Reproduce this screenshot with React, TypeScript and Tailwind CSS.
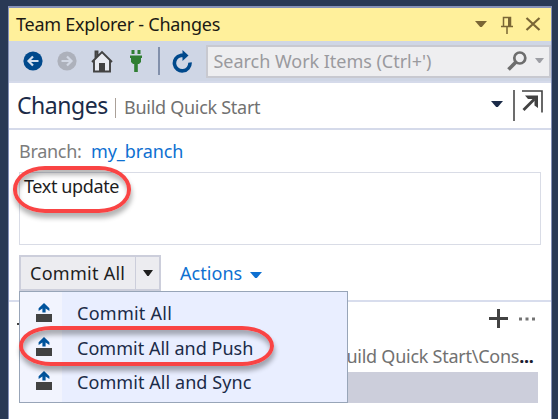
import type { ReactNode } from "react";

function Caret({ className, w = 12, h = 6 }: { className: string; w?: number; h?: number }) {
  return (
    <svg className={`block shrink-0 ${className}`} width={w} height={h} viewBox="0 0 12 6" preserveAspectRatio="none">
      <path d="M0 0H12L6.8 6H5.2Z" fill="currentColor" />
    </svg>
  );
}

function TitleBar() {
  return (
    <div className="flex h-[33px] items-center bg-[#fff09b] pl-[7px] text-[#1c1a14]">
      <span className="w-[205px] whitespace-nowrap pb-px text-[18px] leading-[24px] tracking-[-0.26px]">Team Explorer - Changes</span>
      <Caret className="mb-[2px] ml-[254px] text-[#7a6635]" />
      <svg className="ml-[14px] block shrink-0" width="12" height="18" viewBox="0 0 12 18">
        <path d="M2.5 10V1.5H9.5V10M0 10.5H12M6 11V18" fill="none" stroke="#7a6635" strokeWidth="1.5" />
        <path d="M7 1H10V10H7Z" fill="#7a6635" />
      </svg>
      <svg className="mb-[2px] ml-[12px] block shrink-0" width="16" height="14" viewBox="0 0 16 14">
        <path d="M1.5 1L14.5 13M14.5 1L1.5 13" stroke="#7a6635" strokeWidth="2.2" />
      </svg>
    </div>
  );
}

function Toolbar() {
  return (
    <div className="flex h-[40px] items-center bg-[#cfd6e5] pl-[14px]">
      <svg className="block shrink-0" width="20" height="20" viewBox="0 0 20 20">
        <circle cx="10" cy="10" r="9.6" fill="#00498c" />
        <path d="M15.5 10H6M10 5.5L5.5 10L10 14.5" fill="none" stroke="#d5e0ee" strokeWidth="2.2" />
      </svg>
      <svg className="ml-[14px] block shrink-0" width="20" height="20" viewBox="0 0 20 20">
        <circle cx="10" cy="10" r="9.6" fill="#adb1bb" />
        <path d="M4.5 10H14M10 5.5L14.5 10L10 14.5" fill="none" stroke="#d2d8e4" strokeWidth="2.2" />
      </svg>
      <svg className="ml-[14px] block shrink-0" width="22" height="23" viewBox="0 0 22 23">
        <path d="M3 11V21.5H19V11L11 3Z" fill="#e9ebf1" />
        <path d="M1 12L11 2L21 12M3 10.5V21.5H19V10.5M4.5 8V1.5H6.5V6" fill="none" stroke="#424242" strokeWidth="1.9" />
        <path d="M8 13H14V22H8Z" fill="#424242" />
      </svg>
      <svg className="ml-[17px] block shrink-0" width="12" height="22" viewBox="0 0 12 22">
        <path d="M1.5 0H4.5V4H1.5ZM7.5 0H10.5V4H7.5ZM0 5.5H12V8H11V12L9 14H7.8V22H4.2V14H3L1 12V8H0Z" fill="#2f7e32" />
      </svg>
      <div className="ml-[16px] h-[28px] w-[1.5px] bg-[#8290ab]" />
      <svg className="ml-[12px] block shrink-0" width="21" height="23" viewBox="0 0 21 23">
        <path d="M18 12.5A7.8 7.8 0 1 1 8.8 5.4H12" fill="none" stroke="#00498c" strokeWidth="3.6" />
        <path d="M10.5 0L16.5 5.5L10.5 11Z" fill="#00498c" />
      </svg>
      <div className="ml-[13px] flex h-[33px] flex-1 items-center border-2 border-[#c8c9d0] bg-[#eeeef0] pl-[6px] text-[#9a9a9e]">
        <span className="w-[220px] whitespace-nowrap pb-px text-[18px] leading-[24px] tracking-[-0.03px]">Search Work Items (Ctrl+')</span>
        <svg className="mb-px ml-[73px] block shrink-0" width="20" height="20" viewBox="0 0 20 20">
          <circle cx="12.8" cy="7" r="5.5" fill="none" stroke="#6d6d6d" strokeWidth="2.7" />
          <path d="M9 11L1.5 18.5" stroke="#6d6d6d" strokeWidth="3.7" />
        </svg>
        <Caret className="mb-px ml-[8px] text-[#9d9ea4]" w={9} h={5} />
      </div>
    </div>
  );
}

function Heading() {
  return (
    <div className="flex h-[49px] items-center border-y-2 border-[#d5daea] pl-[8px]">
      <span className="w-[92px] whitespace-nowrap pb-px text-[23px] leading-[30px] tracking-[-0.45px] text-[#1b2b48]">Changes</span>
      <div className="mt-[4px] ml-[6px] h-[20px] w-px bg-[#aaa098]" />
      <span className="ml-[8px] w-[138px] whitespace-nowrap pt-[2px] text-[18px] leading-[24px] tracking-[-0.28px] text-[#717171]">Build Quick Start</span>
      <Caret className="mb-[4px] ml-[229px] text-[#1b2b48]" />
      <div className="mb-px ml-[10px] h-[31px] w-[1.5px] bg-[#6c6c6c]" />
      <svg className="mb-[9px] ml-[7px] block shrink-0" width="21" height="23" viewBox="0 0 21 23">
        <path d="M0 1H20V22.5" fill="none" stroke="#424242" strokeWidth="1.6" />
        <path d="M1.5 20L12.5 9" fill="none" stroke="#424242" strokeWidth="2.8" />
        <path d="M3 5.5H16V18L12.5 15.5V9H6Z" fill="#424242" />
      </svg>
    </div>
  );
}

function UploadIcon() {
  return (
    <svg className="block shrink-0" width="16" height="19" viewBox="0 0 16 19">
      <path d="M8 0L13.4 5.2V8L9.6 5.4V9.5H6.4V5.4L2.6 8V5.2Z" fill="#00539c" />
      <path d="M0 11H16V19H0Z" fill="#424242" />
    </svg>
  );
}

function MenuItem({ children, spacing }: { children: ReactNode; spacing: string }) {
  return (
    <div className="flex h-[34.4px] items-center">
      <div className="flex h-full w-[42px] items-center pb-[2px] pl-[16px]">
        <UploadIcon />
      </div>
      <span className={`ml-[15px] whitespace-nowrap text-[18px] leading-[24px] text-[#1b2b48] ${spacing}`}>{children}</span>
    </div>
  );
}

function CommitMenu() {
  return (
    <div className="absolute left-[10px] top-[36px] h-[112px] w-[329px] border border-[#98a5b8] bg-[linear-gradient(90deg,#f2f4fe_42px,#e9eeff_42px)] pt-[4px]">
      <MenuItem spacing="tracking-[0.26px]">Commit All</MenuItem>
      <MenuItem spacing="tracking-[0.02px]">Commit All and Push</MenuItem>
      <MenuItem spacing="tracking-[0.07px]">Commit All and Sync</MenuItem>
      <div className="absolute left-[-1px] top-[34px] h-[40px] w-[255px] [border-radius:32px_/_20px] border-4 border-[#f94444] shadow-[1px_5px_5px_rgba(0,0,0,0.32),inset_1px_5px_5px_rgba(0,0,0,0.3)]" />
    </div>
  );
}

export default function App() {
  return (
    <div className="h-[419px] w-[558px] overflow-hidden bg-[#293955] pl-[8px] pt-[6px] font-['Noto_Sans','Open_Sans',sans-serif]">
      <div className="h-[413px] w-[544px] border-x border-t-2 border-[#8591b8] bg-white">
        <TitleBar />
        <Toolbar />
        <Heading />
        <div className="flex h-[42px] items-center pl-[10px] text-[18px] leading-[24px] tracking-[-0.3px]">
          <span className="w-[62px] whitespace-nowrap text-[#7c7c7c]">Branch:</span>
          <span className="ml-[10px] w-[92px] whitespace-nowrap tracking-[-0.1px] text-[#0e70d1]">my_branch</span>
        </div>
        <div className="relative ml-[10px] h-[73px] w-[522px] border border-[#d9dce6] pl-[4px] text-[18px] leading-[26px] tracking-[-0.38px] text-[#1e1e1e]">
          <span className="whitespace-nowrap">Text update</span>
          <div className="absolute left-[-7px] top-[-7px] h-[47px] w-[118px] [border-radius:32px_/_23px] border-4 border-[#f94444] shadow-[1px_5px_5px_rgba(0,0,0,0.3),inset_1px_5px_5px_rgba(0,0,0,0.28)]" />
        </div>
        <div className="relative z-10 mt-[10px] flex h-[36px] pl-[10px]">
          <div className="flex h-[36px] w-[142px] border-2 border-[#cccedb] bg-[#ececf0] text-[#1e1e1e]">
            <div className="flex w-[115px] items-center border-r border-[#cccedb] pl-[9px] text-[18px] leading-[24px] tracking-[0.27px]">
              <span className="whitespace-nowrap">Commit All</span>
            </div>
            <div className="flex flex-1 items-center justify-center">
              <Caret className="text-[#1e1e1e]" w={10} />
            </div>
          </div>
          <div className="ml-[19px] flex items-center text-[18px] leading-[24px] tracking-[0.05px] text-[#0e70d1]">
            <span className="w-[63px] whitespace-nowrap">Actions</span>
            <Caret className="ml-[7px] mt-[3px]" />
          </div>
          <CommitMenu />
        </div>
        <div className="mt-[9px] h-[2px] bg-[#d8dded]" />
        <div className="relative flex h-[34px] items-center justify-end pb-px pr-[16px]">
          <div className="absolute left-[8px] top-[21px] h-[2px] w-[2px] bg-[#424242]" />
          <svg className="block" width="19" height="19" viewBox="0 0 19 19">
            <path d="M9.5 0V19M0 9.5H19" stroke="#424242" strokeWidth="3" />
          </svg>
          <svg className="ml-[11px] block" width="16" height="4" viewBox="0 0 16 4">
            <path d="M0 .5H3V3.5H0ZM6.5 .5H9.5V3.5H6.5ZM13 .5H16V3.5H13Z" fill="#737373" />
          </svg>
        </div>
        <div className="flex h-[36px] items-center pl-[326px] pt-[4px] text-[18px] leading-[24px] tracking-[-0.25px] text-[#717171]">
          <span className="w-[194px] whitespace-nowrap">Build Quick Start\Cons<span className="font-bold text-[#1b1b30]">...</span></span>
        </div>
        <div className="ml-[10px] h-[31px] w-[519px] bg-[#cccedb]" />
      </div>
    </div>
  );
}
